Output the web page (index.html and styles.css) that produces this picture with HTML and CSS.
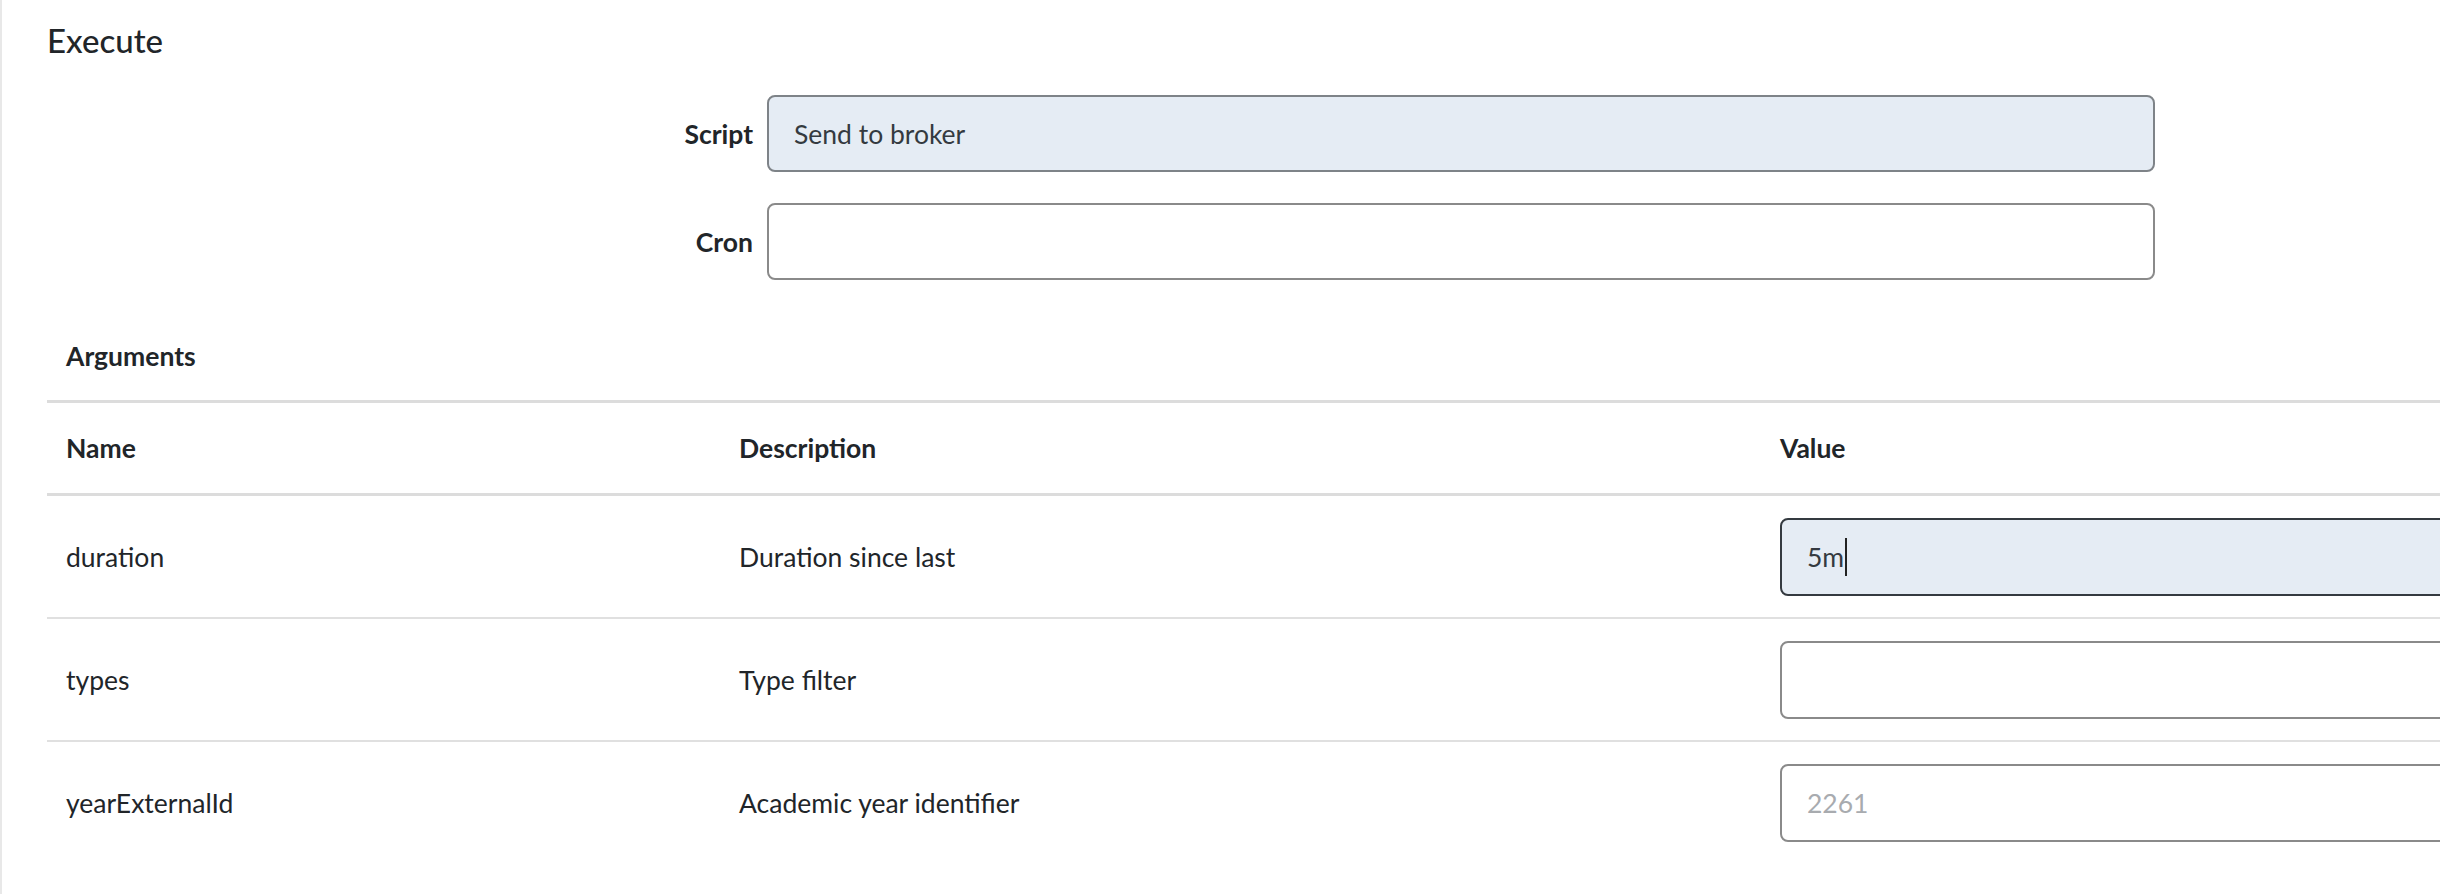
FILE: index.html
```html
<!DOCTYPE html>
<html lang="en">
<head>
    <meta charset="UTF-8">
    <meta name="viewport" content="width=device-width, initial-scale=1.0">
    <title>Execute</title>
    <link rel="stylesheet" href="styles.css">
</head>
<body>

<div class="panel">
    <h2 class="panel-title">Execute</h2>

    <div class="form">
        <div class="form-row">
            <label class="form-label" for="script">Script</label>
            <input class="field field-readonly" id="script" type="text" value="Send to broker" readonly>
        </div>
        <div class="form-row">
            <label class="form-label" for="cron">Cron</label>
            <input class="field" id="cron" type="text">
        </div>
    </div>

    <div class="args-title">Arguments</div>
    <table class="args">
        <thead>
            <tr>
                <th class="col-name">Name</th>
                <th class="col-desc">Description</th>
                <th class="col-value">Value</th>
            </tr>
        </thead>
        <tbody>
            <tr>
                <td>duration</td>
                <td>Duration since last</td>
                <td><div class="field field-focus">5m<span class="caret"></span></div></td>
            </tr>
            <tr>
                <td>types</td>
                <td>Type filter</td>
                <td><input class="field" type="text"></td>
            </tr>
            <tr>
                <td>yearExternalId</td>
                <td>Academic year identifier</td>
                <td><input class="field" type="text" placeholder="2261"></td>
            </tr>
        </tbody>
    </table>
</div>

</body>
</html>
```

FILE: styles.css
```css
body {
    margin: 0;
    font-family: Lato, "Open Sans", sans-serif;
    font-size: 26.5px;
    line-height: 38px;
    color: #212529;
    background-color: #fff;
    overflow: hidden;
}

.panel {
    border-left: 2px solid #e8e8e8;
    padding: 16px 0 0 45px;
    min-height: 100vh;
    box-sizing: border-box;
    overflow: hidden;
}

.panel-title {
    margin: 0;
    font-size: 33px;
    line-height: 48px;
    font-weight: 500;
}

/* script / cron rows */
.form {
    margin-top: 31px;
    display: flex;
    flex-direction: column;
    gap: 31px;
}
.form-row {
    display: grid;
    grid-template-columns: 706px 1388px;
    column-gap: 14px;
    align-items: center;
}
.form-label {
    text-align: right;
    font-weight: 700;
}

.field {
    display: flex;
    align-items: center;
    width: 100%;
    height: 77px;
    box-sizing: border-box;
    padding: 0 25px;
    border: 2px solid #8a8a8a;
    border-radius: 8px;
    background-color: #fff;
    font-family: inherit;
    font-size: 26.5px;
    color: #343a40;
    outline: none;
}
.field::placeholder {
    color: #a8abaf;
}
.field-readonly {
    background-color: #e5ecf4;
    border-color: #7e8388;
}
.field-focus {
    background-color: #e5ecf4;
    border-color: #343a40;
}
.caret {
    display: inline-block;
    width: 2px;
    height: 38px;
    margin-left: 1px;
    background-color: #222;
}

/* arguments table */
.args-title {
    margin-top: 57px;
    padding: 0 19px 25px;
    font-weight: 700;
}
.args {
    width: 2800px;
    border-collapse: collapse;
}
.args th {
    text-align: left;
    font-weight: 700;
    padding: 26px 19px;
    border-top: 3px solid #dcdcdc;
    border-bottom: 3px solid #dcdcdc;
}
.args td {
    padding: 22px 19px 21px;
    border-bottom: 2px solid #e0e0e0;
    vertical-align: middle;
}
.args tbody tr:last-child td {
    border-bottom: none;
}
.args .col-name { width: 635px; }
.args .col-desc { width: 1003px; }
.args .field { height: 78px; }
```
